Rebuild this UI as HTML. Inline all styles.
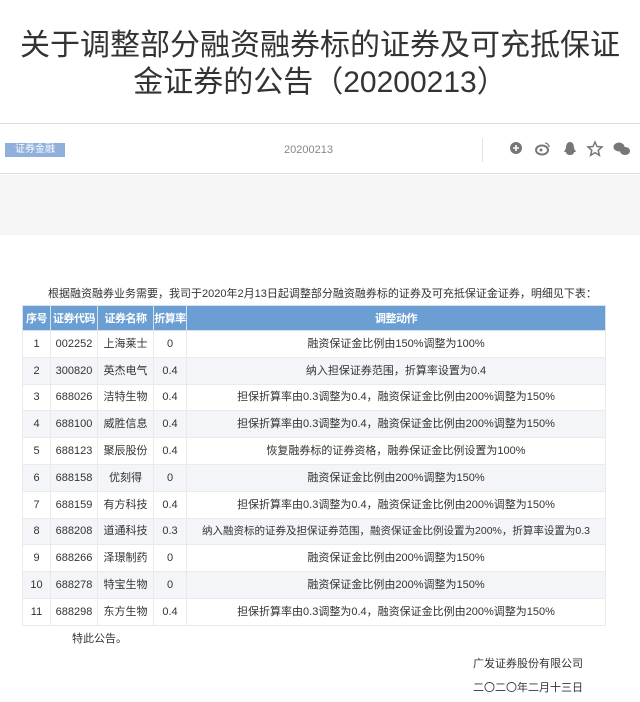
<!DOCTYPE html>
<html><head><meta charset="utf-8"><style>
*{margin:0;padding:0;box-sizing:border-box}
body{width:640px;height:702px;background:#fff;font-family:"Liberation Sans","Noto Sans CJK SC",sans-serif;color:#333;position:relative;overflow:hidden}
.title{position:absolute;top:27px;left:0;width:640px;text-align:center;font-size:30px;line-height:37px;color:#333}
.bar{position:absolute;top:123px;left:0;width:640px;height:51px;border-top:1px solid #ddd;border-bottom:1px solid #ddd;background:#fff}
.tag{position:absolute;left:5px;top:19px;width:60px;height:14px;background:#8fb0dc;color:#fff;font-size:10px;line-height:14px;text-align:center}
.date{position:absolute;left:284px;top:20px;font-size:11px;color:#888}
.sep{position:absolute;left:482px;top:14px;width:1px;height:24px;background:#e5e5e5}
.icons{position:absolute;left:508px;top:16px;width:125px;height:18px}
.gray{position:absolute;top:175px;left:0;width:640px;height:60px;background:#f5f5f5}
.intro{position:absolute;top:285px;left:48px;font-size:11px;color:#333;white-space:nowrap}
table{position:absolute;top:305px;left:22px;width:584px;border-collapse:collapse;font-size:11px;table-layout:fixed}
th{background:#6b9fd4;color:#fff;font-weight:bold;height:25px;border:1px solid #d8e2ee;font-size:11px;white-space:nowrap;padding:0;overflow:hidden;letter-spacing:-0.5px}
td{height:26.8px;border:1px solid #eaeaea;text-align:center;white-space:nowrap;color:#333;padding:0;line-height:14px}
tr:nth-child(odd) td{background:#f3f5f8}
.end{position:absolute;font-size:11px;color:#333}
</style></head><body>
<div class="title">关于调整部分融资融券标的证券及可充抵保证<br>金证券的公告（20200213）</div>
<div class="bar"><div class="tag">证券金融</div><div class="date">20200213</div><div class="sep"></div>
<svg class="icons" viewBox="0 0 125 18">
<circle cx="8" cy="8" r="6" fill="#777"/><path d="M5 8h6M8 5v6" stroke="#fff" stroke-width="1.6"/>
<ellipse cx="34" cy="10" rx="6" ry="4.5" fill="none" stroke="#777" stroke-width="2"/><circle cx="33" cy="10" r="1.5" fill="#777"/><path d="M37 3a4 4 0 0 1 4 4" stroke="#777" fill="none" stroke-width="1.3"/>
<path d="M62 2c-3 0-4 3-4 6l-2 4 2 0c0 2 2 3 4 3s4-1 4-3l2 0-2-4c0-3-1-6-4-6z" fill="#777"/>
<path d="M87 2l2 4.5 5 .5-3.8 3.3 1.2 5-4.4-2.7-4.4 2.7 1.2-5-3.8-3.3 5-.5z" fill="none" stroke="#777" stroke-width="1.5"/>
<ellipse cx="111" cy="7" rx="5.5" ry="4.5" fill="#777"/><ellipse cx="117" cy="11" rx="5" ry="4" fill="#777"/>
</svg></div>
<div class="gray"></div>
<div class="intro">根据融资融券业务需要，我司于2020年2月13日起调整部分融资融券标的证券及可充抵保证金证券，明细见下表：</div>
<table>
<colgroup><col style="width:28px"><col style="width:47px"><col style="width:56px"><col style="width:33px"><col></colgroup>
<tr><th>序号</th><th>证券代码</th><th>证券名称</th><th>折算率</th><th>调整动作</th></tr>
<tr><td>1</td><td>002252</td><td>上海莱士</td><td>0</td><td>融资保证金比例由150%调整为100%</td></tr>
<tr><td>2</td><td>300820</td><td>英杰电气</td><td>0.4</td><td>纳入担保证券范围，折算率设置为0.4</td></tr>
<tr><td>3</td><td>688026</td><td>洁特生物</td><td>0.4</td><td>担保折算率由0.3调整为0.4，融资保证金比例由200%调整为150%</td></tr>
<tr><td>4</td><td>688100</td><td>威胜信息</td><td>0.4</td><td>担保折算率由0.3调整为0.4，融资保证金比例由200%调整为150%</td></tr>
<tr><td>5</td><td>688123</td><td>聚辰股份</td><td>0.4</td><td>恢复融券标的证券资格，融券保证金比例设置为100%</td></tr>
<tr><td>6</td><td>688158</td><td>优刻得</td><td>0</td><td>融资保证金比例由200%调整为150%</td></tr>
<tr><td>7</td><td>688159</td><td>有方科技</td><td>0.4</td><td>担保折算率由0.3调整为0.4，融资保证金比例由200%调整为150%</td></tr>
<tr><td>8</td><td>688208</td><td>道通科技</td><td>0.3</td><td style="font-size:10.5px">纳入融资标的证券及担保证券范围，融资保证金比例设置为200%，折算率设置为0.3</td></tr>
<tr><td>9</td><td>688266</td><td>泽璟制药</td><td>0</td><td>融资保证金比例由200%调整为150%</td></tr>
<tr><td>10</td><td>688278</td><td>特宝生物</td><td>0</td><td>融资保证金比例由200%调整为150%</td></tr>
<tr><td>11</td><td>688298</td><td>东方生物</td><td>0.4</td><td>担保折算率由0.3调整为0.4，融资保证金比例由200%调整为150%</td></tr>
</table>
<div class="end" style="top:630px;left:72px">特此公告。</div>
<div class="end" style="top:655px;left:473px">广发证券股份有限公司</div>
<div class="end" style="top:679px;left:473px">二〇二〇年二月十三日</div>
</body></html>
